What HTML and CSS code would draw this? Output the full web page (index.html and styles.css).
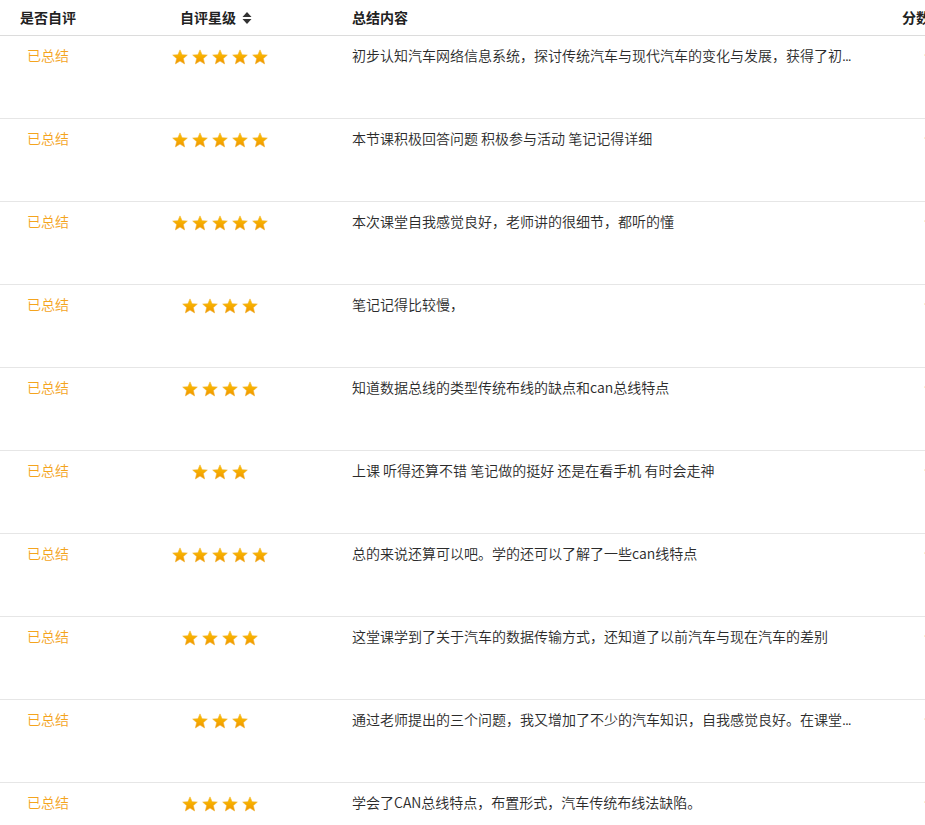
FILE: index.html
```html
<!DOCTYPE html>
<html lang="zh-CN">
<head>
<meta charset="utf-8">
<title>自评列表</title>
<link rel="stylesheet" href="styles.css">
</head>
<body>
<svg width="0" height="0" class="defs">
  <defs>
    <linearGradient id="sg" x1="0" y1="0" x2="0" y2="1">
      <stop offset="0" stop-color="#fcc400"/>
      <stop offset="1" stop-color="#ef9400"/>
    </linearGradient>
    <symbol id="star" viewBox="0 0 16 16">
      <polygon points="8,0.9 10.1,5.7 15.3,6.1 11.4,9.6 12.6,14.9 8,12.1 3.4,14.9 4.6,9.6 0.7,6.1 5.9,5.7" fill="url(#sg)" stroke="#f2b233" stroke-width="0.6" stroke-linejoin="round"/>
    </symbol>
  </defs>
</svg>
<div class="table">
  <div class="row head">
    <div class="c1">是否自评</div>
    <div class="c2">自评星级
      <svg class="sort" width="10" height="12" viewBox="0 0 10 12"><polygon points="5,0 9.5,5 0.5,5" fill="#333"/><polygon points="0.5,7 9.5,7 5,12" fill="#333"/></svg>
    </div>
    <div class="c3">总结内容</div>
    <div class="c4">分数</div>
  </div>
  <div class="row">
    <div class="c1 done">已总结</div>
    <div class="c2 stars"><svg><use href="#star"/></svg><svg><use href="#star"/></svg><svg><use href="#star"/></svg><svg><use href="#star"/></svg><svg><use href="#star"/></svg></div>
    <div class="c3 text">初步认知汽车网络信息系统，探讨传统汽车与现代汽车的变化与发展，获得了初<span class="dots">...</span></div>
    <div class="c4 stars score"><svg><use href="#star"/></svg></div>
  </div>
  <div class="row">
    <div class="c1 done">已总结</div>
    <div class="c2 stars"><svg><use href="#star"/></svg><svg><use href="#star"/></svg><svg><use href="#star"/></svg><svg><use href="#star"/></svg><svg><use href="#star"/></svg></div>
    <div class="c3 text">本节课积极回答问题 积极参与活动 笔记记得详细</div>
    <div class="c4 stars score"><svg><use href="#star"/></svg></div>
  </div>
  <div class="row">
    <div class="c1 done">已总结</div>
    <div class="c2 stars"><svg><use href="#star"/></svg><svg><use href="#star"/></svg><svg><use href="#star"/></svg><svg><use href="#star"/></svg><svg><use href="#star"/></svg></div>
    <div class="c3 text">本次课堂自我感觉良好，老师讲的很细节，都听的懂</div>
    <div class="c4 stars score"><svg><use href="#star"/></svg></div>
  </div>
  <div class="row">
    <div class="c1 done">已总结</div>
    <div class="c2 stars"><svg><use href="#star"/></svg><svg><use href="#star"/></svg><svg><use href="#star"/></svg><svg><use href="#star"/></svg></div>
    <div class="c3 text">笔记记得比较慢，</div>
    <div class="c4 stars score"><svg><use href="#star"/></svg></div>
  </div>
  <div class="row">
    <div class="c1 done">已总结</div>
    <div class="c2 stars"><svg><use href="#star"/></svg><svg><use href="#star"/></svg><svg><use href="#star"/></svg><svg><use href="#star"/></svg></div>
    <div class="c3 text">知道数据总线的类型传统布线的缺点和can总线特点</div>
    <div class="c4 stars score"><svg><use href="#star"/></svg></div>
  </div>
  <div class="row">
    <div class="c1 done">已总结</div>
    <div class="c2 stars"><svg><use href="#star"/></svg><svg><use href="#star"/></svg><svg><use href="#star"/></svg></div>
    <div class="c3 text">上课 听得还算不错 笔记做的挺好 还是在看手机 有时会走神</div>
    <div class="c4 stars score"><svg><use href="#star"/></svg></div>
  </div>
  <div class="row">
    <div class="c1 done">已总结</div>
    <div class="c2 stars"><svg><use href="#star"/></svg><svg><use href="#star"/></svg><svg><use href="#star"/></svg><svg><use href="#star"/></svg><svg><use href="#star"/></svg></div>
    <div class="c3 text">总的来说还算可以吧。学的还可以了解了一些can线特点</div>
    <div class="c4 stars score"><svg><use href="#star"/></svg></div>
  </div>
  <div class="row">
    <div class="c1 done">已总结</div>
    <div class="c2 stars"><svg><use href="#star"/></svg><svg><use href="#star"/></svg><svg><use href="#star"/></svg><svg><use href="#star"/></svg></div>
    <div class="c3 text">这堂课学到了关于汽车的数据传输方式，还知道了以前汽车与现在汽车的差别</div>
    <div class="c4 stars score"><svg><use href="#star"/></svg></div>
  </div>
  <div class="row">
    <div class="c1 done">已总结</div>
    <div class="c2 stars"><svg><use href="#star"/></svg><svg><use href="#star"/></svg><svg><use href="#star"/></svg></div>
    <div class="c3 text">通过老师提出的三个问题，我又增加了不少的汽车知识，自我感觉良好。在课堂<span class="dots">...</span></div>
    <div class="c4 stars score"><svg><use href="#star"/></svg></div>
  </div>
  <div class="row">
    <div class="c1 done">已总结</div>
    <div class="c2 stars"><svg><use href="#star"/></svg><svg><use href="#star"/></svg><svg><use href="#star"/></svg><svg><use href="#star"/></svg></div>
    <div class="c3 text">学会了CAN总线特点，布置形式，汽车传统布线法缺陷。</div>
    <div class="c4 stars score"><svg><use href="#star"/></svg></div>
  </div>
</div>
</body>
</html>
```

FILE: styles.css
```css
html, body {
  margin: 0;
  padding: 0;
  background: #fff;
}
body {
  font-family: "Noto Sans CJK SC", "Noto Sans", sans-serif;
  font-size: 14px;
  color: #333;
  overflow: hidden;
}
.defs {
  position: absolute;
  width: 0;
  height: 0;
}
.table {
  width: 1000px;
}
.row {
  display: grid;
  grid-template-columns: 96px 248px 516px 140px;
  height: 82px;
  border-bottom: 1px solid #e6e6e6;
  line-height: 20px;
  font-weight: 350;
  color: #2b2b2b;
}
.row.head {
  height: 35px;
  line-height: 35px;
  font-weight: bold;
  color: #222;
  border-bottom: 1px solid #dcdcdc;
}
.row > div {
  padding-top: 9px;
  box-sizing: border-box;
}
.row.head > div {
  padding-top: 0;
}
.c1 {
  text-align: center;
}
.c2 {
  display: flex;
  justify-content: center;
  align-items: center;
  gap: 6px;
}
.sort {
  display: block;
  margin-right: 8px;
}
.stars {
  display: flex;
  align-items: flex-start;
  gap: 4px;
}
.row > .stars {
  padding-top: 13px;
}
.stars svg {
  width: 16px;
  height: 16px;
  display: block;
  flex: none;
}
.c3 {
  padding-left: 8px;
  padding-right: 8px;
}
.text {
  white-space: nowrap;
  overflow: hidden;
}
.dots {
  font-family: "Liberation Sans", sans-serif;
  letter-spacing: -1px;
}
.c4 {
  padding-left: 42px;
}
.row > .score {
  padding-left: 64px;
}
.done {
  color: #f4a41e;
}
```
